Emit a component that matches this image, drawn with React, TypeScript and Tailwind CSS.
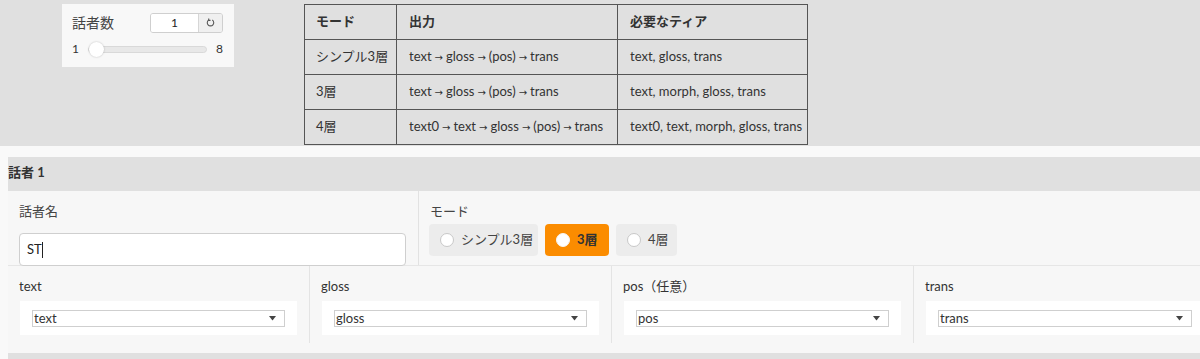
import React from "react";

const font = "font-['Lato','DejaVu_Sans','Noto_Sans_CJK_JP',sans-serif]";

function Radio({ label, active, w }: { label: string; active?: boolean; w: string }) {
  return (
    <div
      className={`flex items-center h-[32px] rounded-[4px] pl-[11px] ${w} ${
        active ? "bg-[#fb8c00] font-bold text-[#333]" : "bg-[#ececec] text-[#444]"
      }`}
    >
      <span
        className={`w-[14px] h-[14px] rounded-full bg-white ${
          active ? "border border-[#f5f5f5]" : "border border-[#c8c8c8]"
        }`}
      />
      <span className="ml-[7px] text-[13px]">{label}</span>
    </div>
  );
}

function SelectCell({ label, value, last }: { label: string; value: string; last?: boolean }) {
  return (
    <div
      className={`w-[302px] h-[77px] pl-[11px] pr-[12px] pt-[12px] ${
        last ? "" : "border-r border-[#e4e4e4]"
      }`}
    >
      <div className="text-[13px] leading-[16px] text-[#333]">{label}</div>
      <div className="mt-[7px] h-[34px] bg-white pt-[9px] px-[12px] ml-[1px]">
        <div className="h-[17px] border border-[#cfcfcf] bg-white flex items-center justify-between pl-[1px] pr-[8px]">
          <span className="text-[13px] leading-[15px] text-[#333]">{value}</span>
          <svg width="7" height="5" viewBox="0 0 7 5">
            <path d="M0 0 L7 0 L3.5 4.5 Z" fill="#444" />
          </svg>
        </div>
      </div>
    </div>
  );
}

function Arrowed({ text }: { text: string }) {
  const parts = text.split(" → ");
  return (
    <>
      {parts.map((p, i) => (
        <React.Fragment key={i}>
          {i > 0 && (
            <span className="font-['DejaVu_Sans',sans-serif] text-[10px] mx-[3px]">→</span>
          )}
          {p}
        </React.Fragment>
      ))}
    </>
  );
}

export default function App() {
  const rows = [
    ["シンプル3層", "text → gloss → (pos) → trans", "text, gloss, trans"],
    ["3層", "text → gloss → (pos) → trans", "text, morph, gloss, trans"],
    ["4層", "text0 → text → gloss → (pos) → trans", "text0, text, morph, gloss, trans"],
  ];
  return (
    <div className={`w-[1200px] h-[359px] overflow-hidden bg-[#f9f9f9] ${font} text-[#333]`}>
      {/* top area */}
      <div className="h-[146px] bg-[#e0e0e0] flex items-start pt-[4px]">
        <div className="ml-[62px] w-[172px] h-[63px] bg-[#f8f8f8] pl-[10px] pr-[11px] pt-[9px]">
          <div className="flex items-center justify-between h-[19px]">
            <span className="text-[14px] text-[#444]">話者数</span>
            <div className="flex h-[20px] border border-[#cfcfcf] rounded-[3px] overflow-hidden">
              <div className="w-[47px] bg-white flex items-center justify-center text-[12px] text-[#222]">
                1
              </div>
              <div className="w-[24px] bg-[#f0f0f0] border-l border-[#d6d6d6] flex items-center justify-center">
                <svg width="9" height="9" viewBox="0 0 10 10" fill="none" stroke="#555" strokeWidth="1.2">
                  <path d="M3 2.2 A3.6 3.6 0 1 0 7 2.2" />
                  <path d="M3 0.6 L3 2.6 L5 2.6" />
                </svg>
              </div>
            </div>
          </div>
          <div className="flex items-center mt-[9px] h-[16px]">
            <span className="text-[12px] w-[16px] text-[#333]">1</span>
            <div className="relative w-[119px] h-[7px] rounded-full bg-[#e8e8e8] border border-[#d9d9d9]">
              <div className="absolute left-0 top-[-5px] w-[15px] h-[15px] rounded-full bg-white shadow-[0_0_2px_rgba(0,0,0,0.25)]" />
            </div>
            <span className="text-[12px] ml-[9px] text-[#333]">8</span>
          </div>
        </div>

        <table className="ml-[70px] w-[503px] table-fixed border-collapse border-[1.5px] border-[#555] text-[13px] text-[#333]">
          <colgroup>
            <col className="w-[92px]" />
            <col className="w-[221px]" />
            <col className="w-[190px]" />
          </colgroup>
          <tbody>
            <tr className="h-[35px]">
              <th className="border-[1.5px] border-[#555] text-left font-bold pl-[11px]">モード</th>
              <th className="border-[1.5px] border-[#555] text-left font-bold pl-[12px]">出力</th>
              <th className="border-[1.5px] border-[#555] text-left font-bold pl-[12px]">必要なティア</th>
            </tr>
            {rows.map((r) => (
              <tr key={r[0]} className="h-[35px]">
                <td className="border-[1.5px] border-[#555] pl-[11px] whitespace-nowrap">{r[0]}</td>
                <td className="border-[1.5px] border-[#555] pl-[12px] whitespace-nowrap">
                  <Arrowed text={r[1]} />
                </td>
                <td className="border-[1.5px] border-[#555] pl-[12px] whitespace-nowrap">{r[2]}</td>
              </tr>
            ))}
          </tbody>
        </table>
      </div>

      <div className="h-[11px]" />

      {/* speaker section */}
      <div className="ml-[8px] w-[1208px]">
        <div className="h-[34px] bg-[#e0e0e0] flex items-center text-[13px] font-bold text-[#333] pb-[2px]">
          話者 1
        </div>
        <div className="flex h-[75px] bg-[#f7f7f7] border-b border-[#e6e6e6]">
          <div className="w-[410px] pl-[11px] pr-[12px] pt-[12px]">
            <div className="text-[13px] leading-[16px] text-[#444]">話者名</div>
            <div className="mt-[14px] h-[33px] bg-white border border-[#cfcfcf] rounded-[4px] flex items-center pl-[7px] text-[13px] text-[#222]">
              ST
              <span className="inline-block w-[1px] h-[16px] bg-[#222]" />
            </div>
          </div>
          <div className="flex-1 border-l border-[#e2e2e2] pl-[10px] pt-[12px]">
            <div className="text-[13px] leading-[16px] text-[#444] pl-[1px]">モード</div>
            <div className="mt-[5px] flex gap-[7px]">
              <Radio label="シンプル3層" w="w-[109px]" />
              <Radio label="3層" active w="w-[64px]" />
              <Radio label="4層" w="w-[61px]" />
            </div>
          </div>
        </div>
        <div className="bg-[#f7f7f7] h-[87px]">
          <div className="flex">
            <SelectCell label="text" value="text" />
            <SelectCell label="gloss" value="gloss" />
            <SelectCell label="pos（任意）" value="pos" />
            <SelectCell label="trans" value="trans" last />
          </div>
        </div>
        <div className="h-[10px] bg-[#e0e0e0]" />
      </div>
    </div>
  );
}
